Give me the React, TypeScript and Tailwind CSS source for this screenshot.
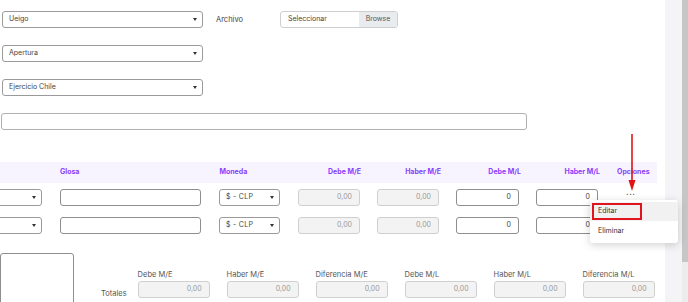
const font = { fontFamily: 'Inter, "Liberation Sans", sans-serif' }

function Caret() {
  return <span className="ml-auto mr-[5px] inline-block h-0 w-0 border-x-[2.5px] border-t-[3px] border-x-transparent border-t-[#333]" />
}

function Select({ label, className = '' }: { label: string; className?: string }) {
  return (
    <div className={`flex h-[17px] items-center rounded-[3px] border border-[#9a9a9a] bg-white pl-[6px] text-[7px] text-[#444] ${className}`}>
      <span>{label}</span>
      <Caret />
    </div>
  )
}

function NumBox({ value, disabled = false, className = '' }: { value: string; disabled?: boolean; className?: string }) {
  return (
    <div
      className={`flex h-[17px] items-center justify-end rounded-[3px] border pr-[7px] text-[7px] ${
        disabled ? 'border-[#cfcfcf] bg-[#f3f3f3] text-[#9a9a9a]' : 'border-[#8e8e8e] bg-white text-[#444]'
      } ${className}`}
    >
      {value}
    </div>
  )
}

function Row() {
  return (
    <div className="flex h-[17px] items-center">
      <Select label="" className="ml-[-20px] w-[62px]" />
      <div className="ml-[18px] h-[17px] w-[141px] rounded-[3px] border border-[#8e8e8e] bg-white" />
      <Select label="$ - CLP" className="ml-[18px] w-[61px] tracking-[0.3px]" />
      <NumBox value="0,00" disabled className="ml-[18px] w-[62px]" />
      <NumBox value="0,00" disabled className="ml-[17px] w-[62px]" />
      <NumBox value="0" className="ml-[17px] w-[63px]" />
      <NumBox value="0" className="ml-[17px] w-[62px]" />
    </div>
  )
}

const totals = ['Debe M/E', 'Haber M/E', 'Diferencia M/E', 'Debe M/L', 'Haber M/L', 'Diferencia M/L']

export default function App() {
  return (
    <div className="flex h-[302px] w-[688px] overflow-hidden bg-white" style={font}>
      <main className="relative w-[665px] shrink-0">
        {/* cabecera del asiento */}
        <div className="flex flex-col gap-[17px] pt-[11px]">
          <div className="flex items-center">
            <Select label="Ueigo" className="ml-[2px] w-[201px]" />
            <span className="ml-[13px] text-[7.5px] text-[#444]">Archivo</span>
            <div className="ml-[37px] flex h-[17px] w-[118px] overflow-hidden rounded-[3px] border border-[#cfcfcf] text-[7px] text-[#444]">
              <span className="flex flex-1 items-center pl-[7px]">Seleccionar</span>
              <span className="flex w-[38px] items-center justify-center bg-[#e9ecef] text-[#555]">Browse</span>
            </div>
          </div>
          <Select label="Apertura" className="ml-[2px] w-[201px]" />
          <Select label="Ejercicio Chile" className="ml-[2px] w-[201px]" />
          <div className="ml-[1px] h-[17px] w-[526px] rounded-[3px] border border-[#b0b0b0]" />
        </div>

        {/* tabla de líneas */}
        <div className="mt-[32px] flex h-[21px] w-[657px] items-center bg-[#f8f4ff] text-[7px] font-bold text-[#8a3ffc]">
          <span className="ml-[60px]">Glosa</span>
          <span className="ml-[140px]">Moneda</span>
          <span className="ml-auto w-[62px] pr-[1px] text-right">Debe M/E</span>
          <span className="ml-[17px] w-[62px] text-right">Haber M/E</span>
          <span className="ml-[17px] w-[63px] text-right">Debe M/L</span>
          <span className="ml-[17px] w-[62px] text-right">Haber M/L</span>
          <span className="ml-[17px] w-[40px]">Opciones</span>
        </div>
        <div className="mt-[6px] flex flex-col gap-[11px]">
          <div className="flex items-center">
            <Row />
            <span className="ml-[28px] -translate-y-[6px] text-[8px] font-bold leading-none tracking-[0.5px] text-[#555]">...</span>
          </div>
          <Row />
        </div>

        {/* totales */}
        <div className="mt-[19px] flex">
          <div className="h-[60px] w-[74px] rounded-[3px] border border-[#8e8e8e]" />
          <span className="ml-[27px] mt-[35px] text-[7.5px] text-[#555]">Totales</span>
          <div className="ml-[11px] mt-[17px] flex gap-[17px]">
            {totals.map((t) => (
              <div key={t} className="flex w-[72px] flex-col gap-[1px]">
                <span className="text-[7.5px] leading-[10px] text-[#555]">{t}</span>
                <NumBox value="0,00" disabled className="border-[#c8c8c8]" />
              </div>
            ))}
          </div>
        </div>

        {/* flecha de ayuda */}
        <svg className="absolute left-[626px] top-[134px]" width="12" height="58" viewBox="0 0 12 58">
          <line x1="6" y1="0" x2="6" y2="48" stroke="#e01414" strokeWidth="1.6" />
          <path d="M2.5 46 L6 57 L9.5 46 Z" fill="#e01414" />
        </svg>

        {/* menú de opciones */}
        <div className="absolute left-[590px] top-[200px] flex w-[88px] flex-col rounded-[3px] bg-white py-[2px] text-[7px] text-[#333] shadow-[0_2px_8px_rgba(0,0,0,0.18)]">
          <div className="bg-[#f1f1f1] px-[2px] py-[1px]">
            <div className="w-[50px] border-2 border-[#e0141e] px-[4px] py-[1px]">Editar</div>
          </div>
          <div className="px-[8px] py-[5px]">Eliminar</div>
        </div>
      </main>
      <div className="w-[17px] shrink-0 bg-[#f4f4f6]" />
      <div className="flex w-[6px] shrink-0 flex-col bg-[#ececec]">
        <div className="h-[262px] bg-[#c6c6c6]" />
      </div>
    </div>
  )
}
